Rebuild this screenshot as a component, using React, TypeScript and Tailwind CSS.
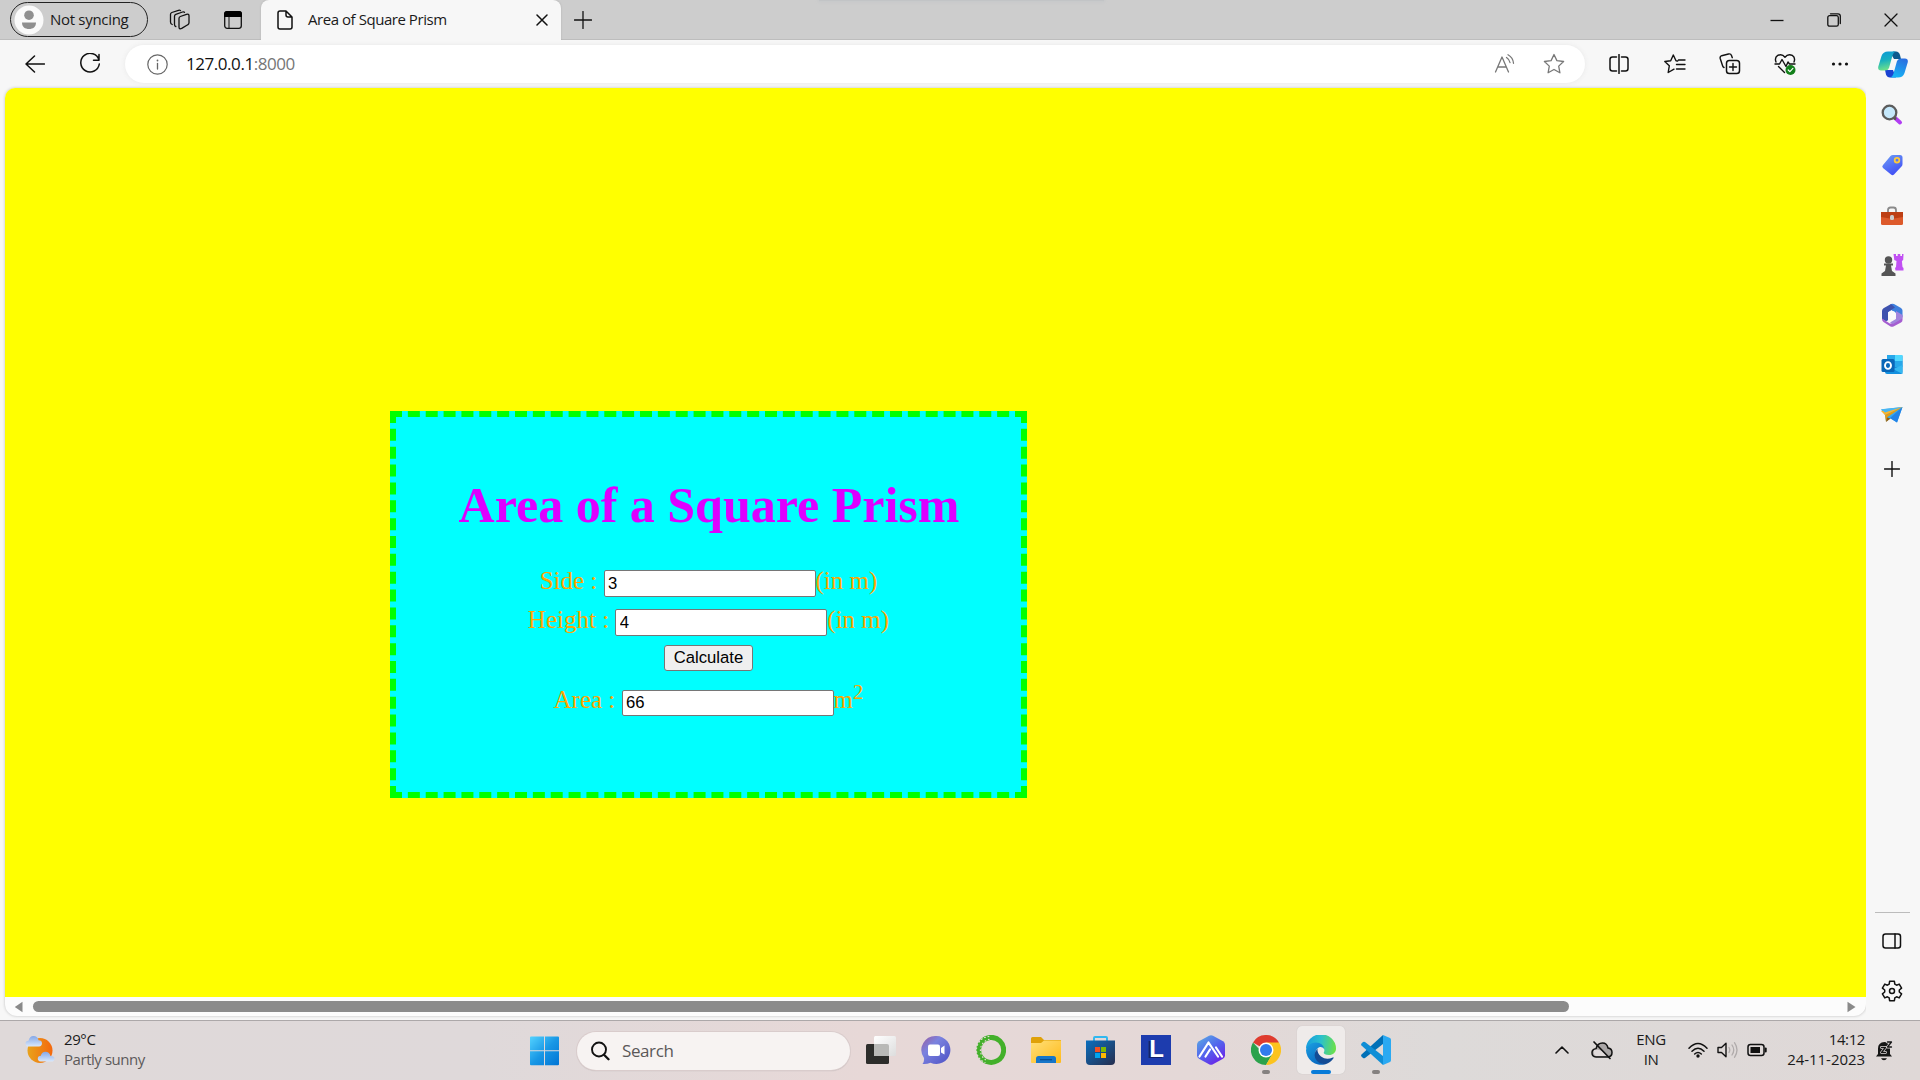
import React from "react";

type IconProps = { w: number; h: number; className?: string; children: React.ReactNode };

function Icon({ w, h, className = "", children }: IconProps) {
  return (
    <svg width={w} height={h} viewBox={`0 0 ${w} ${h}`} fill="none" stroke="#111" strokeWidth={1.3} strokeLinecap="round" strokeLinejoin="round" className={`block shrink-0 ${className}`}>
      {children}
    </svg>
  );
}

function TitleBar() {
  return (
    <header className="flex h-10 shrink-0 items-center bg-[#cdcdcd] pb-px shadow-[inset_0_-1px_0_#bdbdbd]">
      <div className="ml-[10px] flex h-[35px] w-[138px] shrink-0 items-center rounded-full border-[1.5px] border-[#222] pl-[3px]">
        <Icon w={30} h={30}>
          <circle cx="15" cy="15" r="14.5" fill="#fafafa" stroke="none" />
          <circle cx="15" cy="10.2" r="4.8" fill="#8f8f8f" stroke="none" />
          <path d="M8 17.5h14c0 4.5-3 6.5-7 6.5s-7-2-7-6.5z" fill="#8f8f8f" stroke="none" />
        </Icon>
        <span className="ml-[6px] whitespace-nowrap text-[15px] tracking-[-0.3px] text-[#1a1a1a]">Not syncing</span>
      </div>
      <Icon w={22} h={22} className="ml-[21px]">
        <path d="M10 9.500q0-1.500 1.300-2l6.200-2.200q2.500-.6 2.500 1.500v7q0 1.400-1.300 2l-6 3.600q-2.700 1.200-2.700-1.400z" />
        <path d="M6.800 17.500q-1.300-.3-1.300-2V7.300q0-1.500 1.300-2L13.500 3q1.300-.4 2 .3M3.200 15.500Q1.500 15 1.500 13V5.500q0-1.500 1.300-2L9.500 1.300q1.300-.4 2 .3" />
      </Icon>
      <Icon w={20} h={20} className="ml-[32px]">
        <rect x="1.700" y="1.700" width="16.600" height="16.600" rx="2.500" />
        <path d="M1 7V4q0-3 3-3h12q3 0 3 3v3z" fill="#000" stroke="none" />
        <path d="M6 7v11" strokeWidth="1" />
      </Icon>
      <div className="mt-px ml-[18px] flex h-10 w-[300px] shrink-0 items-center rounded-t-[8px] bg-[#f7f7f7] pb-px pl-[16px] shadow-[0_0_2px_#aaa]">
        <Icon w={16} h={20}>
          <path d="M3 1h6l6 6v10q0 2-2 2H3q-2 0-2-2V3q0-2 2-2zM9 1v4q0 2 2 2h4" strokeWidth="1.500" />
        </Icon>
        <span className="ml-[15px] w-[228px] whitespace-nowrap text-[15px] tracking-[-0.45px] text-[#1a1a1a]">Area of Square Prism</span>
        <Icon w={12} h={12}><path d="M1 1l10 10M11 1L1 11" strokeWidth="1.500" /></Icon>
      </div>
      <Icon w={18} h={18} className="ml-[13px]"><path d="M9 .5v17M.5 9h17" /></Icon>
      <div className="ml-[227px] h-px w-[285px] self-start bg-[#c2c4c6] shadow-[0_0_3px_1px_#c5c7c9]" />
      <div className="ml-auto mr-[22px] flex items-center gap-[43px]">
        <Icon w={14} h={14}><path d="M.5 7.500h13" strokeLinecap="butt" /></Icon>
        <Icon w={14} h={14}>
          <rect x=".8" y="2.700" width="10.500" height="10.500" rx="1.800" />
          <path d="M3.500.8H11q2.300 0 2.300 2.300V10.500" />
        </Icon>
        <Icon w={14} h={14}><path d="M1 1l12 12M13 1L1 13" /></Icon>
      </div>
    </header>
  );
}

function Toolbar() {
  return (
    <div className="flex h-12 shrink-0 items-center bg-[#f7f7f7]">
      <Icon w={20} h={18} className="ml-[25px]"><path d="M9.500 1L1 9l8.500 8M1 9h18.500" strokeWidth="1.500" /></Icon>
      <Icon w={22} h={22} className="ml-[34px]"><path d="M20 7A9.300 9.300 0 1 0 20.300 11M20 1.500V7.200h-5.500" strokeWidth="1.500" /></Icon>
      <div className="ml-[24px] flex h-[38px] w-[1460px] shrink-0 items-center rounded-full bg-white pl-[22px] shadow-[0_0_5px_#e8e8e8]">
        <Icon w={21} h={21}>
          <circle cx="10.500" cy="10.500" r="9.700" stroke="#666" strokeWidth="1.200" />
          <path d="M10.500 9.500v5.500" stroke="#666" />
          <circle cx="10.500" cy="6.500" r=".9" fill="#666" stroke="none" />
        </Icon>
        <span className="-mt-px ml-[18px] whitespace-nowrap text-[17px] tracking-[-0.45px] text-[#111]">127.0.0.1<span className="text-[#767676]">:8000</span></span>
        <Icon w={22} h={20} className="ml-auto mr-[27px]">
          <path d="M1.500 18L8 3l6.500 15M3.800 13h8.400M12.500 3.500q3 2 3.500 5M14 .8q5 2.700 5.500 8.500" stroke="#777" />
        </Icon>
        <Icon w={22} h={22} className="mr-[20px]">
          <path d="M11 1.500l2.900 6.100 6.700.9-4.900 4.600 1.200 6.700L11 16.500l-5.900 3.300 1.200-6.700L1.400 8.500l6.700-.9z" stroke="#777" />
        </Icon>
      </div>
      <Icon w={20} h={20} className="ml-[24px]">
        <path d="M7.500 3H3.500Q1 3 1 5.500v9Q1 17 3.500 17h4M12.500 3h4Q19 3 19 5.500v9q0 2.500-2.500 2.500h-4M10 .5v19" strokeWidth="1.500" />
      </Icon>
      <Icon w={22} h={20} className="ml-[35px]">
        <path d="M13.700 7L12 6.700 9.300 1 6.700 6.700.8 7.500l4.500 4.300L4.200 18.500l5.800-3.300M14.500 6H21M12.500 10.500H21M12.500 15H21" strokeWidth="1.400" />
      </Icon>
      <Icon w={22} h={22} className="ml-[33px]">
        <rect x="7.500" y="7.500" width="13" height="13" rx="2.800" strokeWidth="1.500" />
        <path d="M14 10.500v7M10.500 14h7M5 14.500Q3.800 14 3.500 12.500L1.200 5.500Q.7 3.300 2.700 2.700L9.500 1q2.300-.5 3 1.500l.8 2.200" strokeWidth="1.400" />
      </Icon>
      <Icon w={22} h={22} className="ml-[33px]">
        <path d="M2 9Q.3 4.500 3.700 2.400 8 .3 11 4.200 14 .3 18.300 2.400 21.700 4.500 20 9M1 11h4.500L8 6.500l4 7L14 9l1.500 2H21M4.500 13.500l6 6" strokeWidth="1.400" />
        <circle cx="16.500" cy="17" r="5" fill="#13801a" stroke="none" />
        <path d="M14.200 17l1.700 1.600 3-3.200" stroke="#fff" strokeWidth="1.200" />
      </Icon>
      <Icon w={18} h={6} className="ml-[35px]">
        <g fill="#111" stroke="none"><circle cx="2.500" cy="3" r="1.600" /><circle cx="9" cy="3" r="1.600" /><circle cx="15.500" cy="3" r="1.600" /></g>
      </Icon>
      <Icon w={30} h={27} className="ml-[29px]">
        <defs>
          <linearGradient id="cpA" x1="0" y1="0" x2=".2" y2="1"><stop offset="0" stopColor="#0b98d7" /><stop offset=".5" stopColor="#17afc0" /><stop offset="1" stopColor="#6be08c" /></linearGradient>
          <linearGradient id="cpB" x1=".7" y1="0" x2=".3" y2="1"><stop offset="0" stopColor="#2b6fe0" /><stop offset="1" stopColor="#16b6f6" /></linearGradient>
        </defs>
        <g stroke="none">
          <path d="M15 .5h3q3 0 4 3.500L23 8h-7l-3-5z" fill="#0b5a8f" />
          <path d="M7 19h8l3 7.500h-6q-3 0-4-3z" fill="#1a43d2" />
          <path d="M10 .5h8q-2.500.5-3.500 4L11 17q-1 2.500-4 2.500H3q-3.500 0-2.700-4L3.500 5Q5 .5 10 .5z" fill="url(#cpA)" />
          <path d="M20 26.500h-8q2.500-.5 3.500-4L19 10q1-2.500 4-2.500h4q3.500 0 2.700 4L26.500 22q-1.500 4.500-6.500 4.500z" fill="url(#cpB)" />
        </g>
      </Icon>
    </div>
  );
}

type FieldProps = { label: string; value: string; unit: React.ReactNode; className: string; inputClass: string };

function Field({ label, value, unit, className, inputClass }: FieldProps) {
  return (
    <div className={`flex h-[27px] items-start justify-center ${className}`}>
      <span className="-mt-0.5 whitespace-pre text-[25px] leading-none">{label}</span>
      <input readOnly value={value} className={`w-[212px] rounded-[2px] border border-[#767676] bg-white px-[3.500px] font-['Liberation_Sans',sans-serif] text-[16.67px] text-black outline-none ${inputClass}`} />
      <span className="-mt-0.5 whitespace-pre text-[25px] leading-none">{unit}</span>
    </div>
  );
}

function Page() {
  return (
    <main className="ml-[5px] flex h-[928px] w-[1861px] flex-col overflow-hidden rounded-[10px] rounded-b-[12px] bg-[#fcfcfc] shadow-[0_0_3px_#bbb]">
      <div className="h-[909px] bg-[#ffff00] pl-[385px] pt-[323px]">
        <div className="h-[387px] w-[637px] border-[6px] border-dashed border-[#00ff00] bg-[#00ffff] pt-[63px] font-['Liberation_Serif',serif] text-[#ffa500]">
          <h1 className="whitespace-nowrap pl-px text-center text-[50px] font-bold leading-none text-[#dd00ff]">Area of a Square Prism</h1>
          <Field label="Side : " value="3" unit="(in m)" className="mt-[40px]" inputClass="h-[27px]" />
          <Field label="Height : " value="4" unit="(in m)" className="mt-[12px]" inputClass="h-[27px]" />
          <div className="mt-[9px] flex justify-center">
            <button className="h-[26px] w-[89px] rounded-[3px] border border-[#767676] bg-[#efefef] font-['Liberation_Sans',sans-serif] text-[16.67px] leading-[22px] text-black">Calculate</button>
          </div>
          <Field label="Area : " value="66" unit={<>m<sup className="-top-[9px] text-[20.8px]">2</sup></>} className="mt-[18px]" inputClass="mt-px h-[26px]" />
        </div>
      </div>
      <div className="flex h-[19px] items-center">
        <Icon w={9} h={12} className="ml-[9px]"><path d="M8.500.8v10.400L.8 6z" fill="#8a8a8a" stroke="none" /></Icon>
        <div className="ml-[10px] h-[11px] w-[1536px] rounded-full bg-[#8b8b8b]" />
        <Icon w={9} h={12} className="ml-auto mr-[10px]"><path d="M.5.8v10.400L8.500 6z" fill="#8a8a8a" stroke="none" /></Icon>
      </div>
    </main>
  );
}

function Sidebar() {
  return (
    <aside className="flex flex-1 flex-col items-center bg-[#f7f7f7] pr-[2px] pt-[16px]">
      <Icon w={24} h={22}>
        <path d="M14.500 13.500l5.500 5" stroke="#b13df2" strokeWidth="4" />
        <path d="M13 12.500l2 2" stroke="#555" strokeWidth="3" />
        <circle cx="9.500" cy="8.500" r="6.800" fill="#c5e8fb" stroke="#5c5c5c" strokeWidth="2.300" />
      </Icon>
      <Icon w={22} h={22} className="mt-[28px]">
        <defs><linearGradient id="tag" x1="0" y1="0" x2=".5" y2="1"><stop stopColor="#6ea0f5" /><stop offset="1" stopColor="#4250f5" /></linearGradient></defs>
        <path d="M12 1h7q2.500 0 2.500 2.500V10q0 1.500-1 2.500l-7.500 8q-1.500 1.500-3 0l-8-6.500q-1.500-1.500 0-3L9.500 2Q10.500 1 12 1z" fill="url(#tag)" stroke="none" />
        <circle cx="16" cy="6.200" r="2.300" stroke="#ffca3a" strokeWidth="1.800" />
      </Icon>
      <Icon w={24} h={20} className="mt-[30px]">
        <path d="M8 6V4q0-2.500 2.500-2.500h3Q16 1.500 16 4v2" stroke="#8a8a8a" strokeWidth="1.800" />
        <rect x="1" y="6" width="22" height="13" rx="1.500" fill="#dd5a2b" stroke="none" />
        <path d="M1 6h22v5l-9 1.500h-4L1 11z" fill="#bd3f14" stroke="none" />
        <rect x="10" y="9" width="4" height="5" rx="1.500" fill="#ccc" stroke="none" />
      </Icon>
      <Icon w={24} h={24} className="mt-[27px]">
        <path d="M13.500 1h2.500v2h1.700V1h2.600v2H22V1h1.500l-.3 6-1.300 1 .6 6 1 1v2.500h-8l-.5-2.500 1-1 .5-6-2.200-1z" fill="#c150f3" stroke="none" />
        <g fill="#555" stroke="none"><circle cx="8.500" cy="7" r="3.700" /><path d="M4 10.500h9v2h-2l1 5.500 3.500 2.500V23h-14v-2.500L5 18l1-5.500H4z" /></g>
      </Icon>
      <Icon w={22} h={24} className="mt-[26px]">
        <g stroke="none">
          <path d="M10 1q1.500-.7 3 0l7 4q1.500 1 1.500 2.500V14l-6-3-5-4-5 3V7z" fill="#3e7fdd" />
          <path d="M10 1L2.500 5.200Q1 6.200 1 8v8l4 2.300 2-1V9l7-4.500z" fill="#3e52ae" />
          <path d="M1 15.500l7 4.500q1.500 1 3 0l9-5q1.500-1 1.500-3.500V17q0 1.500-1.500 2.500l-7.500 4q-1.500.7-3 0L2.500 19Q1 18 1 16z" fill="#a55dd0" />
          <path d="M15 8v8l-6 3.500 3 1.500 8.500-5q1-1 1-2.500V12z" fill="#a184dd" />
          <circle cx="11.200" cy="12" r="3.900" fill="#fafafa" />
        </g>
      </Icon>
      <Icon w={22} h={22} className="mt-[27px]">
        <g stroke="none">
          <path d="M6 1h14q1.500 0 1.500 1.500V18q0 2-2 2H6z" fill="#1688d8" /><path d="M6 1h8v6H6zM14 7h7.500v6H14z" fill="#28a8ea" /><path d="M14 1h7.500v6H14z" fill="#50d9ff" />
          <path d="M4 11l17.500 9H6q-2 0-2-2z" fill="#1490df" /><path d="M21.500 11v9L12 15z" fill="#35b8f1" />
          <rect x=".5" y="5" width="13" height="13" rx="1.500" fill="#0a67b8" />
        </g>
        <ellipse cx="7" cy="11.500" rx="3" ry="3.400" stroke="#fff" strokeWidth="1.900" />
      </Icon>
      <Icon w={24} h={18} className="mt-[30px]">
        <g stroke="none"><path d="M1 3.500L22.500 1 17 16.500l-6.500-4L6 15.500 5 9z" fill="#37a8ed" /><path d="M5 9L22.500 1 7.500 11 6 16z" fill="#e59b14" /><path d="M22.500 1L17 16.500 10 12z" fill="#2383e8" /><path d="M5 9L22.500 1 1 5z" fill="#ffb52a" /><path d="M1 3.200L22.500 1 5 6.500z" fill="#49b6f2" /><path d="M7 11.500l3.500 1L6 16z" fill="#9d5f08" /></g>
      </Icon>
      <Icon w={16} h={16} className="mt-[37px]"><path d="M8 .5v15M.5 8h15" strokeWidth="1.400" /></Icon>
      <div className="mt-[435px] h-px w-[35px] bg-[#bcbcbc]" />
      <Icon w={20} h={18} className="mt-[19px]"><rect x="1" y="2" width="17.500" height="14" rx="2.500" strokeWidth="1.500" /><path d="M13 2v14" strokeWidth="1.500" /></Icon>
      <Icon w={22} h={22} className="mt-[30px]">
        <path d="M8.600 1.300h4.800l.4 2.800 1.800 1.100 2.600-1.100 2.400 4.100L18.300 10v2l2.300 1.800-2.400 4.100-2.600-1.100-1.800 1.100-.4 2.800H8.600l-.4-2.800-1.800-1.100-2.600 1.100-2.400-4.100L3.700 12v-2L1.400 8.200l2.400-4.100 2.600 1.100 1.800-1.100z" strokeWidth="1.500" />
        <circle cx="11" cy="11" r="2.500" strokeWidth="1.500" />
      </Icon>
    </aside>
  );
}

function TaskIcon({ children }: { children: React.ReactNode }) {
  return <div className="flex h-[59px] w-[55px] shrink-0 items-center justify-center pb-px"><Icon w={30} h={30}>{children}</Icon></div>;
}

function Taskbar() {
  return (
    <footer className="flex h-[60px] shrink-0 items-center border-t border-[#aca8a9] bg-[linear-gradient(90deg,#dfd9d9_0%,#dfd9da_25%,#e7d8d7_45%,#e4d8d7_62%,#dddad9_75%,#dfd8d7_100%)] text-[15px]">
      <div className="flex w-[530px] shrink-0 items-center pb-[3px] pl-[25px]">
        <Icon w={31} h={30}>
          <defs>
            <linearGradient id="sun"><stop stopColor="#e8a31c" /><stop offset="1" stopColor="#f4680d" /></linearGradient>
            <linearGradient id="cl" x1="0" y1="0" x2="0" y2="1"><stop stopColor="#84a7e8" /><stop offset="1" stopColor="#d9e8fb" /></linearGradient>
          </defs>
          <circle cx="15" cy="16.500" r="12.500" fill="url(#sun)" stroke="none" />
          <path d="M3 12.500q-2.500-.3-2.500-3t3-2.800Q4.500 2 8.500 2t5 4.200q3.500 0 3.500 3t-3 3.300z" fill="url(#cl)" stroke="none" />
          <path d="M15.500 27.500q-2.700-.3-2.700-3t3-2.800q1-4 4.700-4t5 4.200q4 0 4 2.800t-3 2.800z" fill="url(#cl)" stroke="none" />
        </Icon>
        <div className="ml-[8px] whitespace-nowrap leading-5">
          <div className="tracking-[-0.4px] text-[#1b1b1b]">29°C</div>
          <div className="tracking-[-0.45px] text-[#5c595a]">Partly sunny</div>
        </div>
      </div>
      <Icon w={30} h={30}>
        <defs><linearGradient id="win" gradientUnits="userSpaceOnUse" x1="0" y1="0" x2="30" y2="30"><stop stopColor="#54d3ff" /><stop offset=".5" stopColor="#1897e5" /><stop offset="1" stopColor="#0072d3" /></linearGradient></defs>
        <path d="M1 .5h13v13.700H0V1.500q0-1 1-1zM15 .5h13q1 0 1 1v12.700H15zM0 15.300h14v14H1q-1 0-1-1zM15 15.300h14v13q0 1-1 1H15z" fill="url(#win)" stroke="none" />
      </Icon>
      <div className="ml-[17px] flex h-[38px] w-[273px] shrink-0 items-center rounded-full bg-[#f7f3f2] pl-[13px] shadow-[0_0_0_1px_#d9cccc,0_1px_1px_#aaa]">
        <Icon w={20} h={20}><circle cx="9" cy="8.500" r="7" strokeWidth="1.900" /><path d="M14 13.700l4.500 4.500" strokeWidth="2.300" /></Icon>
        <span className="ml-[12px] text-[17px] tracking-[-0.4px] text-[#5b5858]">Search</span>
      </div>
      <div className="ml-[3px] flex">
        <TaskIcon>
          <defs><linearGradient id="tv" x1="0" y1="0" x2="1" y2="1"><stop stopColor="#fff" /><stop offset="1" stopColor="#ddd" /></linearGradient></defs>
          <g stroke="none"><rect y="9" width="23" height="20" rx="1.500" fill="#2d2d2b" /><rect x="8" y="1" width="22" height="20" rx="1.500" fill="url(#tv)" /><path d="M8 9h13q2 0 2 2v10H8z" fill="#b9b9b7" /></g>
        </TaskIcon>
        <TaskIcon>
          <defs><linearGradient id="chat" x1="0" y1="0" x2="1" y2="1"><stop stopColor="#9a5a9e" /><stop offset=".35" stopColor="#7b83df" /><stop offset="1" stopColor="#4c50c4" /></linearGradient></defs>
          <g stroke="none"><path d="M15.500 1a14 14 0 1 1-6 26.700q-4 1.800-8 1.300 2-2.500 1.500-6A14 14 0 0 1 15.500 1z" fill="url(#chat)" /><rect x="7" y="9.500" width="12" height="11.500" rx="2" fill="#fff" /><path d="M20 13l3.500-2.500v9L20 17.500z" fill="#fff" /></g>
        </TaskIcon>
        <TaskIcon>
          <path d="M13.500 2.500a12.500 12.500 0 1 1-3 24" stroke="#43b02a" strokeWidth="5" strokeLinecap="butt" />
          <path d="M14 2.500a12.500 12.500 0 0 0-3 24.200" stroke="#43b02a" strokeWidth="4.800" strokeLinecap="butt" />
          <path d="M13 1.500a13.500 13.500 0 0 0-4 26" stroke="#e5d9d7" strokeWidth="1.100" strokeDasharray="1 2.600" />
          <path d="M13 4.300a11.300 11.300 0 0 0-3 20.700" stroke="#e5d9d7" strokeWidth="1.200" strokeDasharray=".6 3" />
        </TaskIcon>
        <TaskIcon>
          <defs><linearGradient id="fold" x1="0" y1="0" x2="1" y2="1"><stop stopColor="#ffe07a" /><stop offset="1" stopColor="#ffba1a" /></linearGradient></defs>
          <g stroke="none"><path d="M1.500 2H10l3 3h17v9H0V3.500Q0 2 1.500 2z" fill="#dfa109" /><path d="M0 8h10l3-2.500h17V27q0 1-1 1H1q-1 0-1-1z" fill="url(#fold)" /><path d="M5 28v-4.500Q5 21 7.500 21h15q2.500 0 2.500 2.500V28z" fill="#1676c9" /><path d="M9 24h12v1.300H9z" fill="#0a4f94" /></g>
        </TaskIcon>
        <TaskIcon>
          <defs><linearGradient id="store" x1="0" y1="0" x2="1" y2="1"><stop stopColor="#0b6fbe" /><stop offset="1" stopColor="#272d4d" /></linearGradient></defs>
          <path d="M8 6V3q0-1 1-1h11q1 0 1 1v3" stroke="#31b8ef" strokeWidth="2" />
          <g stroke="none"><path d="M0 5.500h29V26q0 4-4 4H4q-4 0-4-4z" fill="url(#store)" /><path d="M9 12h5v5H9z" fill="#f25022" /><path d="M15 12h5v5h-5z" fill="#7fba00" /><path d="M9 18h5v5H9z" fill="#00a4ef" /><path d="M15 18h5v5h-5z" fill="#ffb900" /></g>
        </TaskIcon>
        <div className="flex h-[59px] w-[55px] items-center justify-center pb-px">
          <div className="flex h-[30px] w-[30px] items-center justify-center bg-[#1d3cae] pb-[3px] pl-[2px] font-['Liberation_Sans',sans-serif] text-[24px] font-bold leading-none text-white [text-shadow:-1px_1px_0_#12226b,-2px_1px_0_#12226b]">L</div>
        </div>
        <TaskIcon>
          <defs><linearGradient id="hex" x1="0" y1="0" x2=".7" y2="1"><stop stopColor="#5cb1e2" /><stop offset=".55" stopColor="#5264ed" /><stop offset="1" stopColor="#6a24e8" /></linearGradient></defs>
          <path d="M13 .8q2-1 4 0l10 5.400q2 1.200 2 3.300v11q0 2-2 3.200l-10 5.600q-2 1-4 0L3 23.700q-2-1.200-2-3.200v-11q0-2 2-3.300z" fill="url(#hex)" stroke="none" />
          <path d="M3.500 21.500L12.500 7.500l9.500 14M9.500 21.500L14 14.500M20 12.500L26 21.500" stroke="#fff" strokeWidth="2.200" />
        </TaskIcon>
        <div className="relative">
          <TaskIcon>
            <g stroke="none"><path d="M15 15L2 7.500A15 15 0 0 1 28 7.500z" fill="#df3b2e" /><path d="M15 15h-6L2 7.500A15 15 0 0 0 15 30l6.500-11z" fill="#2ba24c" /><path d="M15 7.500h13A15 15 0 0 1 15 30l6.500-11.300z" fill="#fcc31e" /><circle cx="15" cy="15" r="7.500" fill="#fff" /><circle cx="15" cy="15" r="6" fill="#327bed" /></g>
          </TaskIcon>
          <span className="absolute bottom-[6px] left-[24px] h-1 w-2 rounded-full bg-[#858180]" />
        </div>
        <div className="relative flex h-[59px] w-[55px] items-center justify-center pb-px">
          <div className="flex h-12 w-12 items-center justify-center rounded-[5px] bg-[#efebea] shadow-[0_0_1px_#bbb]">
            <Icon w={30} h={30}>
              <defs>
                <linearGradient id="eg1" x1="0" y1=".3" x2="1" y2=".4"><stop stopColor="#179ce0" /><stop offset=".5" stopColor="#2cc1cb" /><stop offset="1" stopColor="#6be04a" /></linearGradient>
                <linearGradient id="eg2" x1="0" y1="0" x2=".6" y2="1"><stop stopColor="#1ba0e2" /><stop offset="1" stopColor="#0968c0" /></linearGradient>
              </defs>
              <g stroke="none">
                <path d="M0 14A15 14.500 0 0 1 30 13.500c0 4-3 6.500-7 6.500-4.500 0-6-1.500-5-3s.5-7-6.500-7Q4 10 0 14z" fill="url(#eg1)" />
                <path d="M0 15Q2 7.500 10 7.500q7 0 8.300 6.500-2-2.500-4.500-2Q8 14.500 10 21q2.500 6.500 9 8.300A15 15 0 0 1 0 15z" fill="url(#eg2)" />
                <path d="M11.500 13.500Q6 20 11 26q4 4 8.500 3.200 5-1.400 8-6 .5-1-.7-.8-6.500 3-11.800-.9-4-3.300-3.500-8z" fill="#144c95" />
              </g>
            </Icon>
          </div>
          <span className="absolute bottom-[6px] left-[17.500px] h-1 w-5 rounded-full bg-[#087bd8]" />
        </div>
        <div className="relative">
          <TaskIcon>
            <g stroke="none"><path d="M22 0v9L4 23q-1 .6-2 0L.5 21.500q-.8-1 0-2z" fill="#0070b7" /><path d="M22 30v-9L4 7Q3 6.400 2 7L.5 8.500q-.8 1 0 2z" fill="#0f8ed6" /><path d="M22 0l7 3q1 .5 1 2v20q0 1.500-1 2l-7 3z" fill="#2aa9f2" /></g>
          </TaskIcon>
          <span className="absolute bottom-[6px] left-[24px] h-1 w-2 rounded-full bg-[#858180]" />
        </div>
      </div>
      <div className="ml-auto mr-[27px] flex items-center pb-px">
        <Icon w={14} h={8}><path d="M1 7l6-6 6 6" strokeWidth="1.600" /></Icon>
        <Icon w={22} h={20} className="ml-[22px]">
          <path d="M5 17q-4-.4-4-4.300 0-3.400 4-3.900Q6.500 3 11.500 3 16 3 17 8q4 .5 4 4.500T17 17z" fill="#aaa6a6" strokeWidth="1.500" />
          <path d="M3 10q7-2 13 6H5q-3-1-2-6z" fill="#e0dada" stroke="none" /><path d="M3 2l16 16.500" strokeWidth="1.700" />
        </Icon>
        <div className="-mt-[2px] ml-[20px] w-[36px] text-center leading-5 tracking-[-0.4px] text-[#1b1b1b]"><div>ENG</div><div>IN</div></div>
        <Icon w={20} h={16} className="ml-[19px]">
          <path d="M1 6.200q9-9.500 18 0M4 9.200q6-6 12 0M6.700 12q3.300-3 6.600 0" strokeWidth="1.500" /><circle cx="10" cy="14" r="1.700" fill="#111" stroke="none" />
        </Icon>
        <Icon w={22} h={18} className="ml-[9px]">
          <path d="M1 6.500h3.500L9 2.300v13.400L4.500 11.500H1z" strokeWidth="1.400" /><path d="M12 6.500q1.500 2.500 0 5M15 4q3.500 5 0 10M17.500 1.700q5 7.300 0 14.600" stroke="#b0abab" />
        </Icon>
        <Icon w={20} h={14} className="ml-[8px]">
          <rect x="1" y="1.500" width="16" height="11" rx="2.500" strokeWidth="1.500" /><rect x="3.500" y="4" width="9.500" height="6" fill="#111" stroke="none" /><path d="M18.700 5.500v3" strokeWidth="2" />
        </Icon>
        <div className="-mt-[3px] ml-[20px] w-[78px] whitespace-nowrap text-right leading-5 text-[#1b1b1b]"><div className="tracking-[-0.4px]">14:12</div><div className="-ml-2 tracking-[-0.05px]">24-11-2023</div></div>
        <Icon w={18} h={21} className="ml-[10px]">
          <path d="M3 14V8.500q0-6 6.500-6.500 5.500.5 5.500 6V14l2 2.500H1zM6 18.300h6q-1 2-3 2t-3-2z" fill="#161616" stroke="none" />
          <path d="M6.500 7.500h4L6.500 12.500h4M12.500 2h4l-4 5h4" stroke="#e0dada" strokeWidth="2.800" /><path d="M6.500 7.500h4L6.500 12.500h4M12.500 2h4l-4 5h4" stroke="#161616" strokeWidth="1.300" />
        </Icon>
      </div>
    </footer>
  );
}

export default function App() {
  return (
    <div className="flex h-[1080px] w-[1920px] flex-col overflow-hidden bg-[#f7f7f7] font-['Open_Sans',sans-serif]">
      <TitleBar />
      <Toolbar />
      <div className="flex h-[932px] shrink-0">
        <Page />
        <Sidebar />
      </div>
      <Taskbar />
    </div>
  );
}
